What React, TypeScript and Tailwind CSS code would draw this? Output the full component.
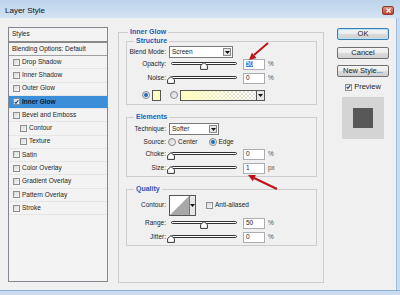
import React from 'react'

const styleItems = [
  { name: 'Drop Shadow' },
  { name: 'Inner Shadow' },
  { name: 'Outer Glow' },
  { name: 'Inner Glow', on: true, active: true },
  { name: 'Bevel and Emboss' },
  { name: 'Contour', sub: true },
  { name: 'Texture', sub: true },
  { name: 'Satin' },
  { name: 'Color Overlay' },
  { name: 'Gradient Overlay' },
  { name: 'Pattern Overlay' },
  { name: 'Stroke' },
]

function Check({ on = false }: { on?: boolean }) {
  return (
    <span className="flex h-[7px] w-[7px] shrink-0 items-center justify-center border border-[#8e8f8f] bg-[linear-gradient(135deg,#d8d8d8,#f8f8f8)]">
      {on && (
        <svg width="6" height="6" viewBox="0 0 6 6">
          <path d="M0.8 3 L2.3 4.6 L5.2 0.9" fill="none" stroke="#1b3f86" strokeWidth="1.3" />
        </svg>
      )}
    </span>
  )
}

function Radio({ on = false }: { on?: boolean }) {
  return (
    <span className="flex h-[8px] w-[8px] shrink-0 items-center justify-center rounded-full border border-[#8a8a8a] bg-[linear-gradient(135deg,#d4d4d4,#f6f6f6)]">
      {on && <span className="h-[4px] w-[4px] rounded-full bg-[#1f6fbf]" />}
    </span>
  )
}

function Arrow() {
  return (
    <svg width="5" height="3" viewBox="0 0 5 3">
      <path d="M0 0 H5 L2.5 3 Z" fill="#111" />
    </svg>
  )
}

function Label({ children }: { children: React.ReactNode }) {
  return <span className="w-[39px] shrink-0 text-right">{children}</span>
}

function Select({ value, width }: { value: string; width: string }) {
  return (
    <div className={`ml-[3px] flex h-[12px] items-center justify-between border border-[#7a7a7a] bg-white pl-[2px] ${width}`}>
      <span>{value}</span>
      <span className="mr-[1px] flex h-[8px] w-[8px] items-center justify-center border border-[#8a8a8a] bg-[#e6e6e6]">
        <Arrow />
      </span>
    </div>
  )
}

function Slider({ pos }: { pos: number }) {
  return (
    <div className="relative ml-[5px] h-[12px] w-[66px] shrink-0">
      <div className="absolute left-0 right-0 top-[4px] h-[3px] rounded-full border border-[#333] bg-white" />
      <svg className="absolute top-[4px]" style={{ left: pos - 4 }} width="8" height="8" viewBox="0 0 8 8">
        <path d="M4 0.6 L7.4 3.6 V7.4 H0.6 V3.6 Z" fill="#fff" stroke="#333" strokeWidth="1" />
      </svg>
    </div>
  )
}

function NumField({ value, unit, selected = false }: { value: string; unit: string; selected?: boolean }) {
  return (
    <>
      <div className="ml-[6px] flex h-[11px] w-[22px] items-center border border-[#abadb3] bg-white pl-[2px]">
        <span className={selected ? 'bg-[#3d7fd6] text-white' : ''}>{value}</span>
      </div>
      <span className="ml-[3px] text-[#555]">{unit}</span>
    </>
  )
}

function SliderRow({ label, pos, value, unit, selected, className = '' }: { label: string; pos: number; value: string; unit: string; selected?: boolean; className?: string }) {
  return (
    <div className={`flex h-[12px] items-center ${className}`}>
      <Label>{label}</Label>
      <Slider pos={pos} />
      <NumField value={value} unit={unit} selected={selected} />
    </div>
  )
}

function Button({ children, primary = false, className = '' }: { children: React.ReactNode; primary?: boolean; className?: string }) {
  return (
    <button
      className={`flex h-[12px] w-[52px] items-center justify-center rounded-[2px] border bg-[linear-gradient(#f4f4f4,#ececec_50%,#dcdcdc_50%,#d0d0d0)] text-[7.5px] leading-none text-[#222] ${
        primary ? 'border-[#3c7fb1] shadow-[inset_0_0_0_1px_#b6e0f5]' : 'border-[#707070]'
      } ${className}`}
    >
      {children}
    </button>
  )
}

function Group({ title, children, className = '', titleLeading = 'leading-[10px]' }: { title: string; children: React.ReactNode; className?: string; titleLeading?: string }) {
  return (
    <fieldset className={`border border-[#cdcdcd] ${className}`}>
      <legend className={`ml-[7px] px-[2px] text-[7px] font-bold text-[#1c5cb8] ${titleLeading}`}>{title}</legend>
      {children}
    </fieldset>
  )
}

export default function App() {
  return (
    <div className="relative flex h-[295px] w-[400px] flex-col overflow-hidden bg-[#c9dcf0] font-['Liberation_Sans',Arial,sans-serif] text-[6.5px] leading-none text-[#1e1e1e]">
      {/* Title bar */}
      <div className="flex h-[18px] shrink-0 items-start justify-between bg-[linear-gradient(#bcd3ea,#d3e3f3)] pl-[5px] pr-[6px]">
        <span className="pt-[6px] text-[8px] leading-[9px] text-[#111]">Layer Style</span>
        <span className="mt-[6px] flex h-[9px] w-[12px] items-center justify-center rounded-[2px] border border-[#8d3a30] bg-[linear-gradient(#e08f80,#c4412e)]">
          <svg width="5" height="5" viewBox="0 0 5 5">
            <path d="M0.5 0.5 L4.5 4.5 M4.5 0.5 L0.5 4.5" stroke="#fff" strokeWidth="1.3" />
          </svg>
        </span>
      </div>

      <div className="flex flex-1">
        <div className="flex w-[396px] items-start bg-[#f0f0f0] pl-[8px] pt-[9px]">
          {/* Styles list */}
          <div className="h-[255px] w-[100px] shrink-0 border border-[#828790] bg-[#f3f3f3]">
            <div className="flex h-[15px] items-center border-b-2 border-[#8a8a8a] pl-[3px]">Styles</div>
            <div className="flex h-[13px] items-center border-b border-[#a0a0a0] pl-[3px]">Blending Options: Default</div>
            {styleItems.map((item) => (
              <div
                key={item.name}
                className={`flex h-[13.27px] items-center gap-[2px] border-b border-[#e6e6e6] ${item.sub ? 'pl-[11px]' : 'pl-[4px]'} ${
                  item.active ? 'bg-[#3a8fd8] font-bold text-[#0d1a33]' : ''
                }`}
              >
                <Check on={item.on} />
                <span>{item.name}</span>
              </div>
            ))}
          </div>

          {/* Inner Glow */}
          <fieldset className="ml-[10px] mt-[1px] h-[255px] w-[206px] shrink-0 border border-[#cdcdcd] pl-[7px] pr-[6px]">
            <legend className="ml-[2px] px-[2px] text-[7px] font-bold leading-[8px] text-[#1c5cb8]">Inner Glow</legend>

            <Group title="Structure" className="pb-[3px]">
              <div className="flex h-[12px] items-center">
                <Label>Blend Mode:</Label>
                <Select value="Screen" width="w-[64px]" />
              </div>
              <SliderRow label="Opacity:" pos={33} value="50" unit="%" selected />
              <SliderRow label="Noise:" pos={0} value="0" unit="%" className="mt-[2px]" />
              <div className="mt-[5px] flex h-[12px] items-center pl-[15px]">
                <Radio on />
                <span className="ml-[2px] h-[11px] w-[9px] border border-[#555] bg-[#ffffc0]" />
                <span className="ml-[9px]">
                  <Radio />
                </span>
                <div className="ml-[2px] flex h-[11px] w-[85px] border border-[#555]">
                  <span className="flex-1 bg-[linear-gradient(to_right,#ffffc0,rgba(255,255,255,0)),repeating-conic-gradient(#dcdcdc_0%_25%,#ffffff_0%_50%)] bg-[length:100%_100%,4px_4px]" />
                  <span className="flex w-[8px] items-center justify-center border-l border-[#555] bg-[#e6e6e6]">
                    <Arrow />
                  </span>
                </div>
              </div>
            </Group>

            <Group title="Elements" className="mt-[7px] pb-[2px]">
              <div className="mt-[1px] flex h-[12px] items-center">
                <Label>Technique:</Label>
                <Select value="Softer" width="w-[50px]" />
              </div>
              <div className="mt-[1px] flex h-[12px] items-center">
                <Label>Source:</Label>
                <span className="ml-[2px]">
                  <Radio />
                </span>
                <span className="ml-[2px]">Center</span>
                <span className="ml-[11px]">
                  <Radio on />
                </span>
                <span className="ml-[2px]">Edge</span>
              </div>
              <SliderRow label="Choke:" pos={0} value="0" unit="%" />
              <SliderRow label="Size:" pos={0} value="1" unit="px" className="mt-[2px]" />
            </Group>

            <Group title="Quality" className="mt-[7px] pb-[2px]">
              <div className="mt-[1px] flex h-[21px] items-center">
                <Label>Contour:</Label>
                <div className="ml-[3px] flex h-[21px] w-[27px] border border-[#555] bg-white">
                  <svg width="19" height="19" viewBox="0 0 19 19">
                    <path d="M0 19 L19 0 V19 Z" fill="#a8a8a8" />
                  </svg>
                  <span className="flex flex-1 items-center justify-center border-l border-[#777] bg-[#e6e6e6]">
                    <Arrow />
                  </span>
                </div>
                <span className="ml-[10px]">
                  <Check />
                </span>
                <span className="ml-[2px]">Anti-aliased</span>
              </div>
              <SliderRow label="Range:" pos={33} value="50" unit="%" className="mt-[1px]" />
              <SliderRow label="Jitter:" pos={0} value="0" unit="%" className="mt-[2px]" />
            </Group>
          </fieldset>

          {/* Buttons + preview */}
          <div className="ml-[13px] mt-[1px] flex w-[52px] flex-col items-center">
            <Button primary>OK</Button>
            <Button className="mt-[7px]">Cancel</Button>
            <Button className="mt-[6px]">New Style...</Button>
            <div className="mt-[6px] flex h-[8px] items-center gap-[2px] text-[7.5px]">
              <Check on />
              <span>Preview</span>
            </div>
            <div className="mt-[6px] flex h-[42px] w-[42px] items-center justify-center bg-[#d4d4d4]">
              <div className="h-[20px] w-[20px] bg-[#575757]" />
            </div>
          </div>
        </div>
        <div className="w-[4px] border-l border-[#9fbcdc] bg-[#c9dcf0]" />
      </div>
      <div className="h-[5px] shrink-0 border-t border-[#8fb0d4] bg-[#c9dcf0]" />

      {/* Red annotation arrows */}
      <svg className="pointer-events-none absolute left-0 top-0" width="400" height="295" viewBox="0 0 400 295">
        <path d="M268 43 L254 55" stroke="#c0121a" strokeWidth="2" />
        <path d="M249 60 L256.5 57.9 L251.9 52.7 Z" fill="#c0121a" />
        <path d="M277 189 L254 178" stroke="#c0121a" strokeWidth="2" />
        <path d="M248 175 L255.8 174.9 L252.8 181.2 Z" fill="#c0121a" />
      </svg>
    </div>
  )
}
